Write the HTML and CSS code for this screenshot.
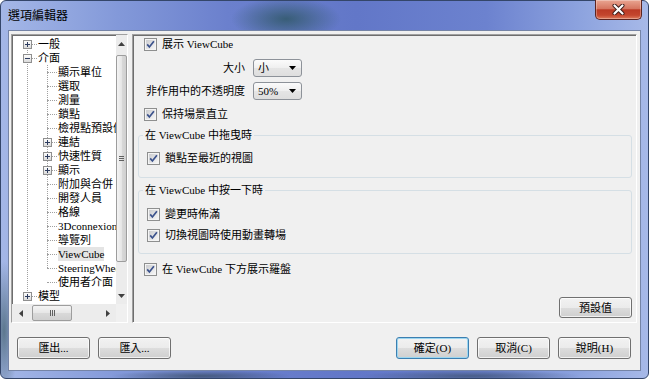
FILE: index.html
```html
<!DOCTYPE html>
<html lang="zh-Hant">
<head>
  <meta charset="UTF-8">
  <title>選項編輯器</title>
  <link rel="stylesheet" href="styles.css">
</head>
<body>

<svg class="defs" width="0" height="0">
  <defs>
    <linearGradient id="cbFill" x1="0" y1="0" x2="1" y2="1">
      <stop offset="0" stop-color="#cbcccf"/>
      <stop offset="1" stop-color="#f6f6f6"/>
    </linearGradient>
    <linearGradient id="expFill" x1="0" y1="0" x2="0" y2="1">
      <stop offset="0" stop-color="#ffffff"/>
      <stop offset="1" stop-color="#d8d8d8"/>
    </linearGradient>
    <symbol id="checkbox" viewBox="0 0 13 13">
      <rect x="0.5" y="0.5" width="12" height="12" fill="#f4f4f4" stroke="#8e8f8f"/>
      <rect x="2" y="2" width="9" height="9" fill="url(#cbFill)"/>
      <path d="M3.2 6.4 L5.4 9 L9.9 3.2" fill="none" stroke="#3b528c" stroke-width="1.7"/>
    </symbol>
    <symbol id="plus" viewBox="0 0 9 9">
      <rect x="0.5" y="0.5" width="8" height="8" fill="url(#expFill)" stroke="#8f8f8f"/>
      <path d="M2 4.5 H7 M4.5 2 V7" stroke="#2d3c5f"/>
    </symbol>
    <symbol id="minus" viewBox="0 0 9 9">
      <rect x="0.5" y="0.5" width="8" height="8" fill="url(#expFill)" stroke="#8f8f8f"/>
      <path d="M2 4.5 H7" stroke="#2d3c5f"/>
    </symbol>
  </defs>
</svg>

<div class="window">
  <div class="titlebar">
    <span class="title">選項編輯器</span>
    <span class="close">
      <svg width="13" height="11" viewBox="0 0 13 11">
        <path d="M2.5 1.5 L10.5 9.5 M10.5 1.5 L2.5 9.5" stroke="#3b1a17" stroke-width="4" stroke-linecap="round"/>
        <path d="M2.5 1.5 L10.5 9.5 M10.5 1.5 L2.5 9.5" stroke="#ffffff" stroke-width="2.2" stroke-linecap="round"/>
      </svg>
    </span>
  </div>

  <div class="client">
    <div class="main">

      <div class="tree">
        <div class="tree-view">
          <div class="tree-list">
            <div class="node"><span class="conn"><svg class="exp"><use href="#plus"/></svg><i class="dots"></i></span><span class="text">一般</span></div>
            <div class="node"><span class="conn"><svg class="exp"><use href="#minus"/></svg><i class="dots"></i></span><span class="text">介面</span></div>
            <div class="children">
              <div class="node"><span class="conn"><i class="dots leaf"></i></span><span class="text">顯示單位</span></div>
              <div class="node"><span class="conn"><i class="dots leaf"></i></span><span class="text">選取</span></div>
              <div class="node"><span class="conn"><i class="dots leaf"></i></span><span class="text">測量</span></div>
              <div class="node"><span class="conn"><i class="dots leaf"></i></span><span class="text">鎖點</span></div>
              <div class="node"><span class="conn"><i class="dots leaf"></i></span><span class="text">檢視點預設值</span></div>
              <div class="node"><span class="conn"><svg class="exp"><use href="#plus"/></svg><i class="dots"></i></span><span class="text">連結</span></div>
              <div class="node"><span class="conn"><svg class="exp"><use href="#plus"/></svg><i class="dots"></i></span><span class="text">快速性質</span></div>
              <div class="node"><span class="conn"><svg class="exp"><use href="#plus"/></svg><i class="dots"></i></span><span class="text">顯示</span></div>
              <div class="node"><span class="conn"><i class="dots leaf"></i></span><span class="text">附加與合併</span></div>
              <div class="node"><span class="conn"><i class="dots leaf"></i></span><span class="text">開發人員</span></div>
              <div class="node"><span class="conn"><i class="dots leaf"></i></span><span class="text">格線</span></div>
              <div class="node"><span class="conn"><i class="dots leaf"></i></span><span class="text">3Dconnexion</span></div>
              <div class="node"><span class="conn"><i class="dots leaf"></i></span><span class="text">導覽列</span></div>
              <div class="node"><span class="conn"><i class="dots leaf"></i></span><span class="text selected">ViewCube</span></div>
              <div class="node"><span class="conn"><i class="dots leaf"></i></span><span class="text">SteeringWheels</span></div>
              <div class="node"><span class="conn"><i class="dots leaf"></i></span><span class="text">使用者介面</span></div>
            </div>
            <div class="node"><span class="conn"><svg class="exp"><use href="#plus"/></svg><i class="dots"></i></span><span class="text">模型</span></div>
          </div>
        </div>

        <div class="vscroll">
          <span class="arrow"><svg width="7" height="4"><path d="M0 4 L3.5 0 L7 4 Z" fill="#404040"/></svg></span>
          <span class="thumb vthumb"><svg width="5" height="5"><path d="M0 0.5 H5 M0 2.5 H5 M0 4.5 H5" stroke="#606060"/></svg></span>
          <span class="track"></span>
          <span class="arrow"><svg width="7" height="4"><path d="M0 0 L3.5 4 L7 0 Z" fill="#404040"/></svg></span>
        </div>
        <div class="hscroll">
          <span class="arrow"><svg width="4" height="7"><path d="M4 0 L0 3.5 L4 7 Z" fill="#404040"/></svg></span>
          <span class="thumb hthumb"><svg width="5" height="6"><path d="M0.5 0 V6 M2.5 0 V6 M4.5 0 V6" stroke="#606060"/></svg></span>
          <span class="track"></span>
          <span class="arrow"><svg width="4" height="7"><path d="M0 0 L4 3.5 L0 7 Z" fill="#404040"/></svg></span>
        </div>
        <div class="corner"></div>
      </div>

      <div class="panel">
        <label class="check-row first"><svg class="cb"><use href="#checkbox"/></svg>展示 ViewCube</label>

        <div class="field-row">
          <span class="field-label">大小</span>
          <span class="select">小<svg width="7" height="4"><path d="M0 0 H7 L3.5 4 Z" fill="#000"/></svg></span>
        </div>
        <div class="field-row second">
          <span class="field-label">非作用中的不透明度</span>
          <span class="select">50%<svg width="7" height="4"><path d="M0 0 H7 L3.5 4 Z" fill="#000"/></svg></span>
        </div>

        <label class="check-row after-fields"><svg class="cb"><use href="#checkbox"/></svg>保持場景直立</label>

        <fieldset class="group drag-group">
          <legend>在 ViewCube 中拖曳時</legend>
          <label class="check-row"><svg class="cb"><use href="#checkbox"/></svg>鎖點至最近的視圖</label>
        </fieldset>

        <fieldset class="group click-group">
          <legend>在 ViewCube 中按一下時</legend>
          <label class="check-row"><svg class="cb"><use href="#checkbox"/></svg>變更時佈滿</label>
          <label class="check-row"><svg class="cb"><use href="#checkbox"/></svg>切換視圖時使用動畫轉場</label>
        </fieldset>

        <label class="check-row compass"><svg class="cb"><use href="#checkbox"/></svg>在 ViewCube 下方展示羅盤</label>

        <button class="btn defaults">預設值</button>
      </div>

    </div>

    <div class="footer">
      <div class="btn-group">
        <button class="btn">匯出...</button>
        <button class="btn">匯入...</button>
      </div>
      <div class="btn-group">
        <button class="btn primary">確定(O)</button>
        <button class="btn">取消(C)</button>
        <button class="btn">說明(H)</button>
      </div>
    </div>
  </div>
</div>

</body>
</html>
```

FILE: styles.css
```css
body {
  margin: 0;
  background: #ffffff;
  font: 11px/14px "Liberation Serif", "Noto Sans CJK TC", serif;
  color: #000;
}
.defs {
  display: block;
}

/* window frame */
.window {
  box-sizing: border-box;
  width: 649px;
  height: 379px;
  border: 1px solid #34466a;
  border-radius: 6px;
  padding: 0 7px 7px;
  display: flex;
  flex-direction: column;
  background:
    radial-gradient(55px 22px at 285px 18px, rgba(48, 88, 104, 0.85), rgba(48, 88, 104, 0)),
    radial-gradient(14px 70px at 3px 330px, rgba(62, 92, 104, 0.7), rgba(62, 92, 104, 0)),
    radial-gradient(90px 6px at 200px 375px, rgba(50, 70, 90, 0.7), rgba(50, 70, 90, 0)),
    radial-gradient(110px 6px at 470px 375px, rgba(50, 70, 90, 0.6), rgba(50, 70, 90, 0)),
    linear-gradient(to right, #a4b7e7 0%, #8399d9 18%, #6b80cd 35%, #6277c8 55%, #6c82cf 75%, #8ea4df 90%, #a7b9e8 100%);
}
.titlebar {
  height: 29px;
  display: flex;
  align-items: center;
}
.title {
  font-size: 12px;
  padding-top: 1px;
  color: #000;
}
.close {
  box-sizing: border-box;
  align-self: flex-start;
  width: 47px;
  height: 20px;
  margin: -1px -1px 0 auto;
  border: 1px solid #5c2420;
  border-top: none;
  border-radius: 0 0 5px 5px;
  background: linear-gradient(#e9a592, #d67661 45%, #bb3a25 52%, #c4462e 80%, #de7b5c);
  box-shadow: inset 0 0 0 1px rgba(255, 255, 255, 0.3);
  display: flex;
  align-items: center;
  justify-content: center;
}

.client {
  flex: 1;
  display: flex;
  flex-direction: column;
  background: #f0f0f0;
  border: 1px solid #7584a6;
}
.main {
  height: 289px;
  padding: 3px 3px 0 2px;
  display: flex;
  gap: 4px;
}

/* tree view */
.tree {
  width: 117px;
  box-sizing: border-box;
  border: 1px solid;
  border-color: #a0a0a0 #ffffff #ffffff #a0a0a0;
  box-shadow: inset 1px 1px 0 #6e6e6e;
  background: #ffffff;
  display: grid;
  grid-template-columns: 104px 11px;
  grid-template-rows: 1fr 18px;
}
.tree-view {
  overflow: hidden;
}
.tree-list {
  padding-top: 2px;
  background: repeating-linear-gradient(#a0a0a0 0 1px, transparent 1px 2px) 15px 9px / 1px 252px no-repeat;
}
.children {
  background: repeating-linear-gradient(#a0a0a0 0 1px, transparent 1px 2px) 35px 0 / 1px 203px no-repeat;
}
.node {
  height: 14px;
  display: flex;
  align-items: center;
  padding-left: 5px;
  white-space: nowrap;
}
.children .node {
  padding-left: 25px;
}
.conn {
  width: 20px;
  flex: none;
  display: flex;
  align-items: center;
}
.exp {
  width: 9px;
  height: 9px;
  margin-left: 6px;
  flex: none;
}
.dots {
  flex: 1;
  height: 0;
  border-top: 1px dotted #a0a0a0;
}
.dots.leaf {
  margin-left: 10px;
}
.text {
  margin-left: 1px;
}
.text.selected {
  background: #e4e4e4;
}

.vscroll, .hscroll {
  background: #ececec;
  display: flex;
}
.vscroll {
  flex-direction: column;
}
.arrow {
  flex: none;
  width: 17px;
  height: 17px;
  display: flex;
  align-items: center;
  justify-content: center;
}
.vscroll .arrow {
  width: 11px;
}
.hscroll .arrow {
  height: 18px;
}
.track {
  flex: 1;
}
.thumb {
  box-sizing: border-box;
  border: 1px solid #9d9d9d;
  border-radius: 2px;
  display: flex;
  align-items: center;
  justify-content: center;
}
.vthumb {
  height: 207px;
  margin-top: 3px;
  background: linear-gradient(to right, #f4f4f4, #e6e6e6 50%, #d9d9d9 51%, #d0d0d0);
}
.hthumb {
  width: 40px;
  margin: 1px 0 1px 3px;
  background: linear-gradient(#f4f4f4, #e6e6e6 50%, #d9d9d9 51%, #d0d0d0);
}
.corner {
  background: #f0f0f0;
}

/* option panel */
.panel {
  flex: 1;
  box-sizing: border-box;
  border: 1px solid;
  border-color: #a0a0a0 #ffffff #ffffff #a0a0a0;
  box-shadow: inset 1px 1px 0 #6e6e6e;
  padding: 2px 4px 4px 5px;
  display: flex;
  flex-direction: column;
}
.check-row {
  height: 14px;
  display: flex;
  align-items: center;
  gap: 5px;
  margin-left: 6px;
  white-space: nowrap;
}
.cb {
  width: 13px;
  height: 13px;
  flex: none;
}
.field-row {
  display: grid;
  grid-template-columns: 107px 49px;
  gap: 8px;
  align-items: center;
  margin-top: 8px;
}
.field-row.second {
  margin-top: 5px;
}
.field-label {
  text-align: right;
}
.select {
  box-sizing: border-box;
  height: 18px;
  padding: 0 5px 0 4px;
  border: 1px solid #8d9299;
  border-radius: 3px;
  background: linear-gradient(#fbfbfb, #efefef 50%, #e5e5e5 51%, #dedede);
  display: flex;
  align-items: center;
  justify-content: space-between;
}
.check-row.after-fields {
  margin-top: 7px;
}
.group {
  margin: 7px 0 0;
  border: 1px solid #d5dfe5;
  border-radius: 3px;
  padding: 9px 8px 12px;
}
.group legend {
  padding: 0 2px;
  margin-left: -4px;
  line-height: 14px;
}
.group .check-row {
  margin-left: 0;
}
.click-group {
  margin-top: 5px;
  padding-top: 10px;
  padding-bottom: 11px;
}
.click-group .check-row + .check-row {
  margin-top: 7px;
}
.check-row.compass {
  margin-top: 8px;
}

/* buttons */
.btn {
  box-sizing: border-box;
  width: 73px;
  height: 22px;
  padding: 0;
  font: inherit;
  color: #000;
  border: 1px solid #707070;
  border-radius: 3px;
  background: linear-gradient(#f2f2f2, #ebebeb 50%, #dddddd 51%, #cfcfcf);
  box-shadow: inset 0 0 0 1px rgba(255, 255, 255, 0.7);
}
.btn.defaults {
  margin-top: auto;
  align-self: flex-end;
  height: 21px;
}
.btn.primary {
  border-color: #3c7fb1;
  box-shadow: inset 0 0 0 1px #9cd6f0;
}
.footer {
  flex: 1;
  padding: 14px 9px 0 8px;
  display: flex;
  justify-content: space-between;
  align-items: flex-start;
}
.btn-group {
  display: flex;
  gap: 8px;
}
```
